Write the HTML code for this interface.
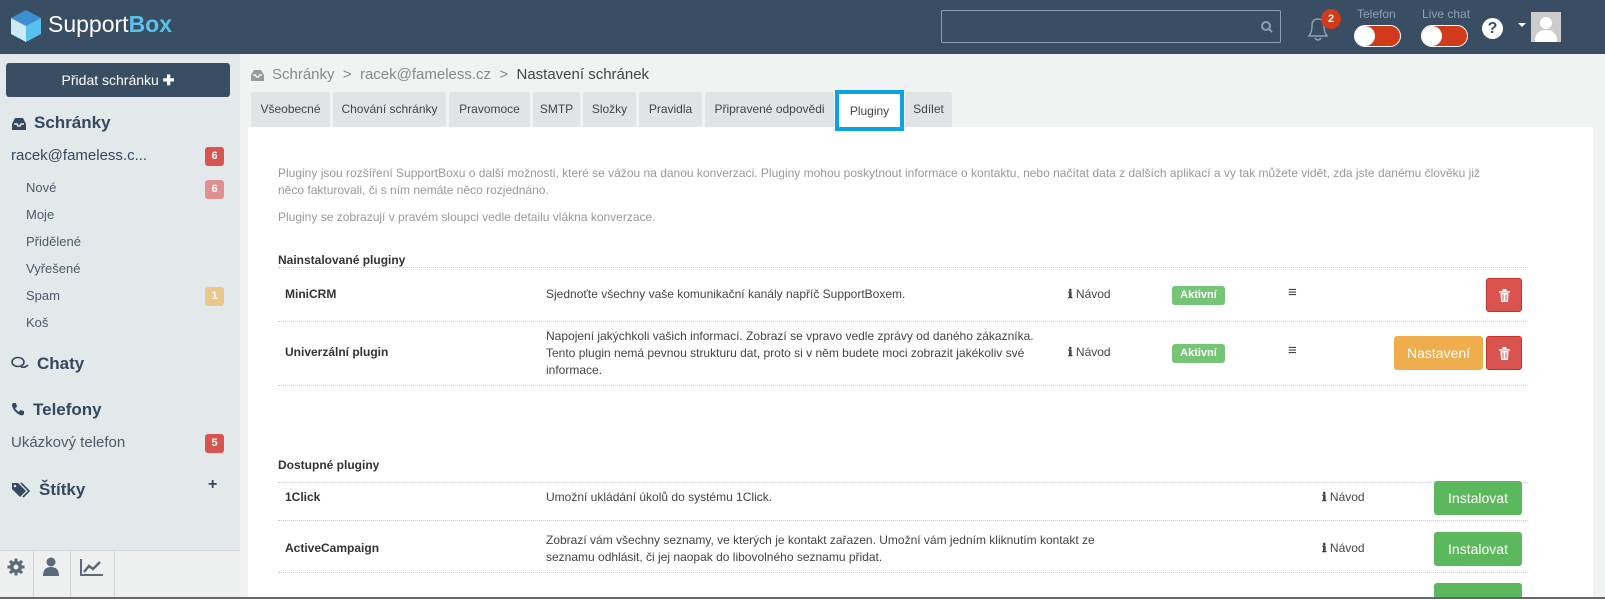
<!DOCTYPE html>
<html style="overflow:hidden"><head><meta charset="utf-8"><style>
*{box-sizing:border-box;margin:0;padding:0}
html,body{width:1605px;height:599px;overflow:hidden}
body{font-family:"Liberation Sans",sans-serif;background:#f1f2f2;position:relative;color:#333}
.hdr{position:absolute;left:0;top:0;width:1605px;height:54px;background:#3a4e63}
.abs{position:absolute}
.side{position:absolute;left:0;top:54px;width:240px;height:545px;background:#e3e8eb}
.btn1{left:6px;top:63px;width:224px;height:34px;background:#3a4e63;border-radius:3px;color:#fff;font-size:14px;text-align:center;line-height:34px}
.sh{font-size:17px;font-weight:bold;color:#34495e}
.si{font-size:13px;color:#4a5a6a}
.badge{position:absolute;width:19px;height:19px;border-radius:3px;color:#fff;font-size:11px;font-weight:bold;text-align:center;line-height:19px}
.tab{position:absolute;top:92px;height:35px;background:#e2e3e6;border-radius:3px 3px 0 0;font-size:12px;color:#444;line-height:35px;text-align:center}
.panel{position:absolute;left:248px;top:127px;width:1345px;height:472px;background:#fff}
.t{position:absolute;font-size:12px;color:#444;white-space:nowrap}
.g{color:#999}
.b{font-weight:bold;color:#333}
.line{position:absolute;left:278px;width:1250px;border-top:1px dotted #ccc}
.akt{position:absolute;width:53px;height:19px;background:#76c576;border-radius:3px;color:#fff;font-size:11px;font-weight:bold;text-align:center;line-height:19px}
.red{position:absolute;width:36px;height:34px;background:#d9534f;border-radius:3px;border:1px solid #c9302c}
.red svg{position:absolute;left:12px;top:10px}
.grn{position:absolute;width:88px;height:34px;background:#5cb85c;border-radius:3px;color:#fff;font-size:14px;text-align:center;line-height:34px}
</style></head><body>
<div class="hdr"></div>
<svg class="abs" style="left:10px;top:9px" width="32" height="34" viewBox="0 0 32 34"><polygon points="16,1 31,9 16,17 1,9" fill="#3d8fd0"/><polygon points="1,9 16,17 16,33 1,25" fill="#cdeaf8"/><polygon points="31,9 16,17 16,33 31,25" fill="#56c1ef"/></svg>
<div class="abs" style="left:48px;top:11px;font-size:23px;color:#fff">Support<b style="color:#5bc0eb">Box</b></div>
<div class="abs" style="left:941px;top:10px;width:340px;height:33px;border:1px solid #8aa0b3;border-radius:2px"></div>
<svg class="abs" style="left:1260px;top:20px" width="14" height="14" viewBox="0 0 14 14"><circle cx="6" cy="6" r="4" stroke="#8aa0b3" stroke-width="2" fill="none"/><line x1="9" y1="9" x2="12" y2="12" stroke="#8aa0b3" stroke-width="2"/></svg>
<svg class="abs" style="left:1305px;top:14px" width="26" height="28" viewBox="0 0 26 28"><path d="M4 22 Q7 18 7 12 Q7 5 13 5 Q19 5 19 12 Q19 18 22 22 Z" stroke="#8aa0b3" stroke-width="1.5" fill="none"/><path d="M10 24 Q13 28 16 24" stroke="#8aa0b3" stroke-width="1.5" fill="none"/></svg>
<div class="abs" style="left:1321px;top:9px;width:20px;height:20px;border-radius:50%;background:#d13a1a;color:#fff;font-size:11px;font-weight:bold;text-align:center;line-height:20px">2</div>
<div class="abs" style="left:1357px;top:7px;font-size:12px;color:#8aa0b3">Telefon</div>
<div class="abs" style="left:1354px;top:25px;width:47px;height:22px;border-radius:11px;background:#d13a1a;border:1px solid #fff"><div style="width:20px;height:20px;border-radius:50%;background:#fff"></div></div>
<div class="abs" style="left:1422px;top:7px;font-size:12px;color:#8aa0b3">Live chat</div>
<div class="abs" style="left:1421px;top:25px;width:47px;height:22px;border-radius:11px;background:#d13a1a;border:1px solid #fff"><div style="width:20px;height:20px;border-radius:50%;background:#fff"></div></div>
<div class="abs" style="left:1482px;top:18px;width:21px;height:21px;border-radius:50%;background:#fff;color:#3a4e63;font-weight:bold;font-size:16px;text-align:center;line-height:21px">?</div>
<div class="abs" style="left:1518px;top:23px;border:4px solid transparent;border-top:4px solid #fff"></div>
<div class="abs" style="left:1531px;top:12px;width:30px;height:30px;background:#ccc;overflow:hidden"><div style="position:absolute;left:9px;top:5px;width:12px;height:12px;border-radius:50%;background:#fff"></div><div style="position:absolute;left:4px;top:18px;width:22px;height:16px;border-radius:10px 10px 0 0;background:#fff"></div></div>

<div class="side"></div>
<div class="abs btn1">Přidat schránku <b>✚</b></div>
<svg class="abs" style="left:11px;top:117px" width="16" height="14"><path d="M1 7L4 1H12L15 7V13H1Z" fill="#34495e"/><path d="M3 7H6L7 9H9L10 7H13" stroke="#e3e8eb" stroke-width="1.5" fill="none"/></svg>
<div class="abs sh" style="left:34px;top:113px">Schránky</div>
<div class="abs" style="left:11px;top:147px;font-size:15px;color:#34495e">racek@fameless.c...</div>
<div class="badge" style="left:205px;top:147px;background:#d9534f">6</div>
<div class="abs si" style="left:26px;top:180px">Nové</div><div class="badge" style="left:205px;top:180px;background:#e09090">6</div>
<div class="abs si" style="left:26px;top:207px">Moje</div>
<div class="abs si" style="left:26px;top:234px">Přidělené</div>
<div class="abs si" style="left:26px;top:261px">Vyřešené</div>
<div class="abs si" style="left:26px;top:288px">Spam</div><div class="badge" style="left:205px;top:287px;background:#ecc78c">1</div>
<div class="abs si" style="left:26px;top:315px">Koš</div>
<svg class="abs" style="left:11px;top:356px" width="18" height="14"><ellipse cx="7" cy="6" rx="6" ry="4.5" stroke="#34495e" stroke-width="1.6" fill="none"/><path d="M10 11Q14 12 17 9" stroke="#34495e" stroke-width="1.6" fill="none"/></svg>
<div class="abs sh" style="left:37px;top:354px">Chaty</div>
<svg class="abs" style="left:11px;top:402px" width="14" height="14"><path d="M2 1L5 1L6 5L4 6Q6 9 8 10L9 8L13 9L13 12Q12 14 9 13Q3 10 1 4Q1 2 2 1Z" fill="#34495e"/></svg>
<div class="abs sh" style="left:33px;top:400px">Telefony</div>
<div class="abs" style="left:11px;top:434px;font-size:15px;color:#4a5a6a">Ukázkový telefon</div>
<div class="badge" style="left:205px;top:434px;background:#d9534f">5</div>
<svg class="abs" style="left:11px;top:482px" width="20" height="16"><path d="M1 1H7L15 9L9 15L1 7Z" fill="#34495e"/><circle cx="4" cy="4" r="1.3" fill="#e3e8eb"/><path d="M10 1L18 9L12 15" stroke="#34495e" stroke-width="1.6" fill="none"/></svg>
<div class="abs sh" style="left:39px;top:480px">Štítky</div>
<div class="abs" style="left:208px;top:476px;font-size:16px;font-weight:bold;color:#34495e">+</div>
<div class="abs" style="left:0;top:550px;width:240px;height:49px;background:#eef0f0;border-top:1px solid #d0d5d8"></div>
<div class="abs" style="left:33px;top:551px;height:48px;border-left:1px solid #d0d5d8"></div>
<div class="abs" style="left:70px;top:551px;height:48px;border-left:1px solid #d0d5d8"></div>
<div class="abs" style="left:114px;top:551px;height:48px;border-left:1px solid #d0d5d8"></div>
<svg class="abs" style="left:7px;top:558px" width="18" height="18" viewBox="0 0 18 18"><g fill="#5a6a7a"><circle cx="9" cy="9" r="6"/><rect x="7.5" y="0.5" width="3" height="17"/><rect x="0.5" y="7.5" width="17" height="3"/><rect x="7.5" y="0.5" width="3" height="17" transform="rotate(45 9 9)"/><rect x="7.5" y="0.5" width="3" height="17" transform="rotate(-45 9 9)"/></g><circle cx="9" cy="9" r="2.5" fill="#eef0f0"/></svg>
<svg class="abs" style="left:42px;top:557px" width="18" height="20"><circle cx="9" cy="5" r="4.5" fill="#5a6a7a"/><path d="M1 19 Q1 10 9 10 Q17 10 17 19Z" fill="#5a6a7a"/></svg>
<svg class="abs" style="left:80px;top:558px" width="24" height="18"><path d="M1 1V17H23" stroke="#5a6a7a" stroke-width="2" fill="none"/><path d="M4 14L9 8L13 11L20 4" stroke="#5a6a7a" stroke-width="2.5" fill="none"/></svg>

<svg class="abs" style="left:250px;top:69px" width="15" height="13"><path d="M1 6L4 1H11L14 6V12H1Z" fill="#999"/><path d="M3 6H5.5L6.5 8H8.5L9.5 6H12" stroke="#f1f2f2" stroke-width="1.4" fill="none"/></svg>
<div class="abs" style="left:272px;top:66px;font-size:15px;color:#888">Schránky &nbsp;&gt;&nbsp; racek@fameless.cz &nbsp;&gt;&nbsp; <span style="color:#444">Nastavení schránek</span></div>
<div class="tab" style="left:251px;width:79px">Všeobecné</div>
<div class="tab" style="left:333px;width:113px">Chování schránky</div>
<div class="tab" style="left:449px;width:81px">Pravomoce</div>
<div class="tab" style="left:533px;width:47px">SMTP</div>
<div class="tab" style="left:583px;width:53px">Složky</div>
<div class="tab" style="left:639px;width:63px">Pravidla</div>
<div class="tab" style="left:705px;width:129px">Připravené odpovědi</div>
<div class="tab" style="left:905px;width:47px">Sdílet</div>
<div class="panel"></div>
<div class="abs" style="left:835px;top:90px;width:69px;height:41px;border:4px solid #0aa3e3;background:#fff;font-size:12px;color:#444;text-align:center;line-height:35px">Pluginy</div>

<div class="t g" style="left:278px;top:166px">Pluginy jsou rozšíření SupportBoxu o další možnosti, které se vážou na danou konverzaci. Pluginy mohou poskytnout informace o kontaktu, nebo načítat data z dalších aplikací a vy tak můžete vidět, zda jste danému člověku již</div>
<div class="t g" style="left:278px;top:183px">něco fakturovali, či s ním nemáte něco rozjednáno.</div>
<div class="t g" style="left:278px;top:210px">Pluginy se zobrazují v pravém sloupci vedle detailu vlákna konverzace.</div>

<div class="t b" style="left:278px;top:253px">Nainstalované pluginy</div>
<div class="line" style="top:267px"></div>
<div class="t b" style="left:285px;top:287px">MiniCRM</div>
<div class="t" style="left:546px;top:287px">Sjednoťte všechny vaše komunikační kanály napříč SupportBoxem.</div>
<div class="t" style="left:1068px;top:287px"><b>ℹ</b> Návod</div>
<div class="akt" style="left:1172px;top:286px">Aktivní</div>
<div class="t" style="left:1288px;top:284px;font-size:15px">≡</div>
<div class="red" style="left:1486px;top:278px"><svg width="11" height="13"><rect x="0" y="2" width="11" height="1.6" fill="#fff"/><rect x="3.5" y="0" width="4" height="2" fill="#fff"/><path d="M1.5 4H9.5L9 13H2Z" fill="#fff"/><path d="M4 5.5V11.5M7 5.5V11.5" stroke="#d9534f"/></svg></div>
<div class="line" style="top:321px"></div>
<div class="t b" style="left:285px;top:345px">Univerzální plugin</div>
<div class="t" style="left:546px;top:328px;line-height:17px">Napojení jakýchkoli vašich informací. Zobrazí se vpravo vedle zprávy od daného zákazníka.<br>Tento plugin nemá pevnou strukturu dat, proto si v něm budete moci zobrazit jakékoliv své<br>informace.</div>
<div class="t" style="left:1068px;top:345px"><b>ℹ</b> Návod</div>
<div class="akt" style="left:1172px;top:344px">Aktivní</div>
<div class="t" style="left:1288px;top:342px;font-size:15px">≡</div>
<div class="abs" style="left:1394px;top:336px;width:89px;height:34px;background:#f0ad4e;border-radius:3px;color:#fff;font-size:14px;text-align:center;line-height:34px">Nastavení</div>
<div class="red" style="left:1486px;top:336px"><svg width="11" height="13"><rect x="0" y="2" width="11" height="1.6" fill="#fff"/><rect x="3.5" y="0" width="4" height="2" fill="#fff"/><path d="M1.5 4H9.5L9 13H2Z" fill="#fff"/><path d="M4 5.5V11.5M7 5.5V11.5" stroke="#d9534f"/></svg></div>
<div class="line" style="top:385px"></div>

<div class="t b" style="left:278px;top:458px">Dostupné pluginy</div>
<div class="line" style="top:482px"></div>
<div class="t b" style="left:285px;top:490px">1Click</div>
<div class="t" style="left:546px;top:490px">Umožní ukládání úkolů do systému 1Click.</div>
<div class="t" style="left:1322px;top:490px"><b>ℹ</b> Návod</div>
<div class="grn" style="left:1434px;top:481px">Instalovat</div>
<div class="line" style="top:520px"></div>
<div class="t b" style="left:285px;top:541px">ActiveCampaign</div>
<div class="t" style="left:546px;top:532px;line-height:17px">Zobrazí vám všechny seznamy, ve kterých je kontakt zařazen. Umožní vám jedním kliknutím kontakt ze<br>seznamu odhlásit, či jej naopak do libovolného seznamu přidat.</div>
<div class="t" style="left:1322px;top:541px"><b>ℹ</b> Návod</div>
<div class="grn" style="left:1434px;top:532px">Instalovat</div>
<div class="line" style="top:572px"></div>
<div class="grn" style="left:1434px;top:583px;height:14px;border-radius:3px 3px 0 0"></div>
<div class="abs" style="left:0;top:597px;width:1605px;height:2px;background:#666"></div>
</body></html>
